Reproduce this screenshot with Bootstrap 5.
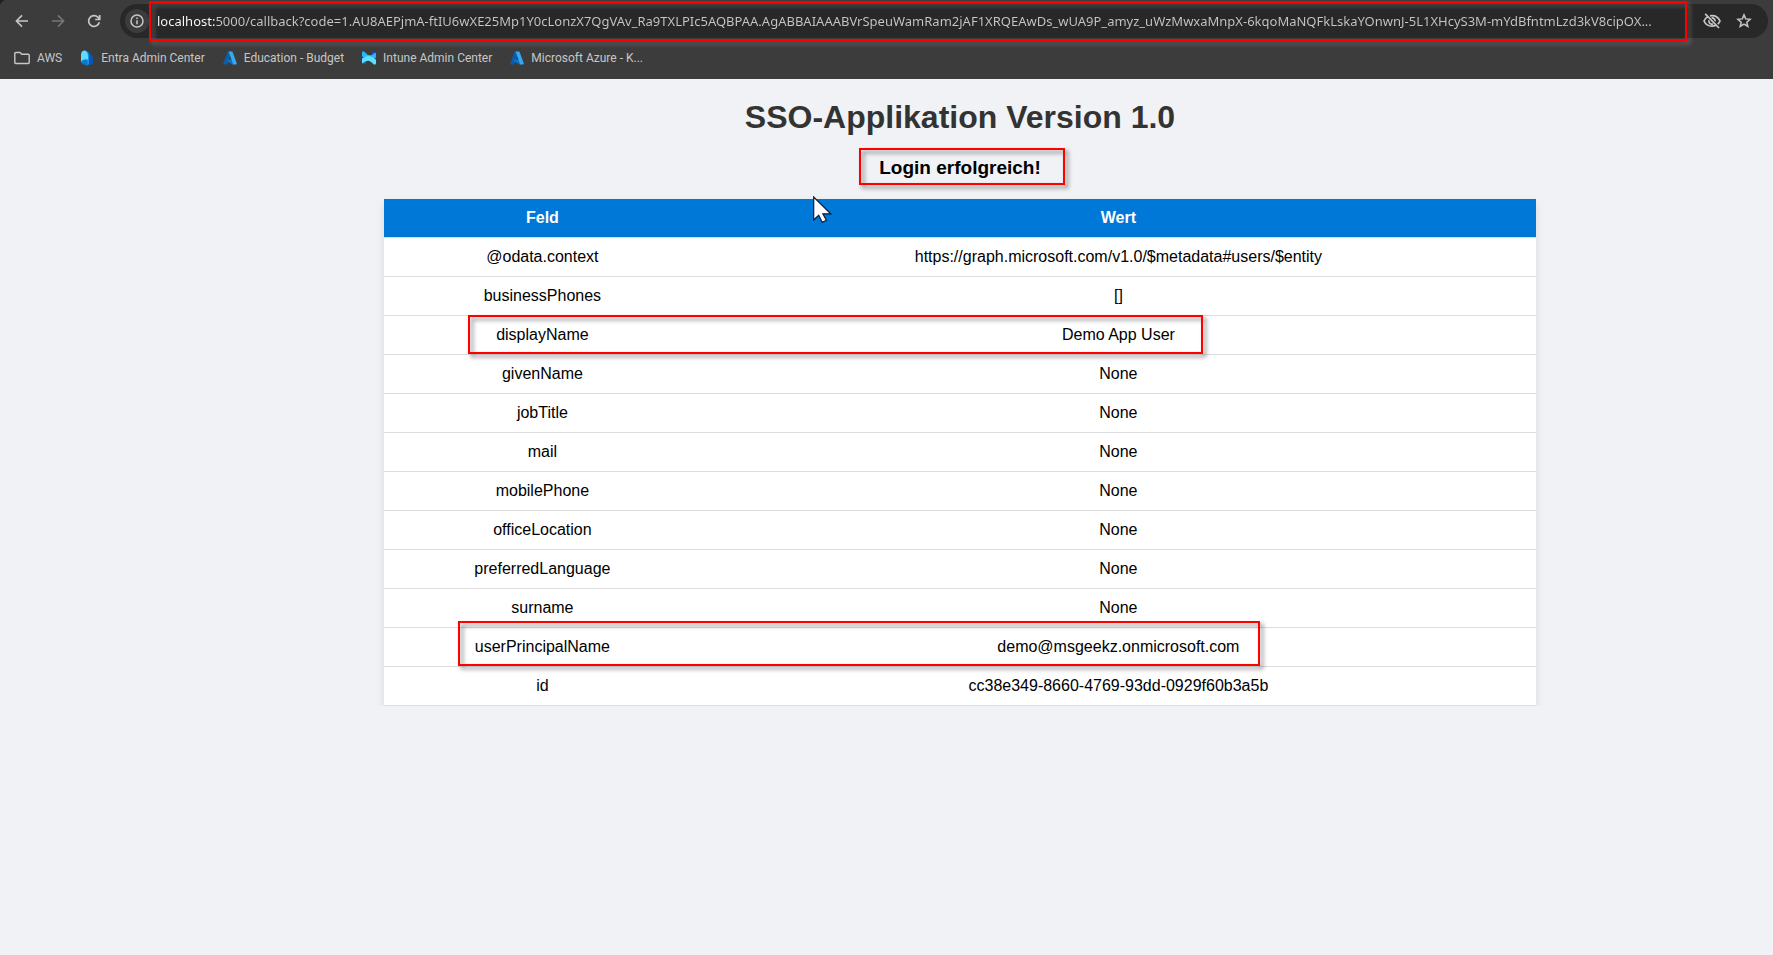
<!DOCTYPE html>
<html lang="de">
<head>
<meta charset="utf-8">
<meta name="viewport" content="width=device-width, initial-scale=1">
<title>SSO-Applikation</title>
<link href="https://cdn.jsdelivr.net/npm/bootstrap@5.3.0/dist/css/bootstrap.min.css" rel="stylesheet">
<style>
  body { background: #f0f2f5; color: #000; font-family: "Liberation Sans", Arial, sans-serif; font-size: 16px; line-height: 18px; }

  /* Browser chrome */
  .browser-bar { background: radial-gradient(circle at 8px 8px, #3c3c3c 8px, #1f1f1f 9px) 0 0 / 8px 8px no-repeat, #3c3c3c; color: #c7c7c7; padding: 4px 5px 2px 11px; }
  .browser-bar svg { display: block; flex: none; }
  .tool-btn { background: none; border: 0; padding: 0; color: inherit; width: 22px; height: 34px; flex: none; }
  .tool-btn:disabled { color: #757575; }
  .nav-tools { gap: 14px; padding-right: 15px; }
  .omnibox { background: #282828; border-radius: 17px; height: 34px; padding: 0 13px 0 5px; }
  .site-info { background: #3c3c3c; border: 0; border-radius: 50%; padding: 0; width: 24px; height: 24px; color: inherit; }
  .url-wrap { margin: 0 13px 0 8px; }
  .url-input { background: linear-gradient(90deg, #fff 58px, #c7c7c7 58px); -webkit-background-clip: text; background-clip: text; -webkit-text-fill-color: transparent; border: 0; outline: 0; padding: 0; display: block; height: 34px; font-family: "Noto Sans", "Open Sans", sans-serif; font-size: 13px; line-height: 18px; }
  .omni-tools { gap: 10px; }
  .bookmark-row { gap: 18px; height: 39px; padding-left: 3px; font-family: Roboto, sans-serif; font-size: 12px; }
  .bookmark-row a { color: #c7c7c7; text-decoration: none; gap: 7px; }

  /* Page */
  .page-main { padding: 20px 0 0 147px; }
  .page-main h1 { color: #333; font-size: 32px; line-height: 36px; font-weight: 700; margin: 0; }
  .page-main h2 { font-size: 19px; line-height: 22px; font-weight: 700; margin: 22px 0 20px; }
  .table-wrap { max-width: 1152px; }
  .user-table { background: #fff; box-shadow: 0 4px 8px rgba(0,0,0,.1); table-layout: fixed; border-collapse: collapse; }
  .user-table th, .user-table td { padding: 10px; border-bottom: 1px solid #ddd; text-align: center; }
  .user-table th { background: #0078d7; color: #fff; }
  .user-table tr { position: relative; }
  .field-col { width: 27.5%; }

  /* Red annotation frames and mouse pointer */
  .marker { position: absolute; border: 2px solid #f00; filter: drop-shadow(3px 3px 2px rgba(0,0,0,.5)); pointer-events: none; }
  .marker-url { inset: -3px 1px -3px -8px; filter: drop-shadow(3px 3px 2px rgba(140,140,140,.6)); }
  .marker-login { inset: -9px -24px -6px -20px; }
  .marker-name { inset: -1px 28.9% 1px 7.3%; }
  .marker-upn { inset: -7px 24% 1px 6.4%; }
  .pointer { position: absolute; left: 429px; top: -3px; }
</style>
</head>
<body>
<header class="browser-bar">
  <div class="d-flex">
    <div class="nav-tools d-flex">
      <button class="tool-btn d-flex align-items-center justify-content-center" type="button" aria-label="Zurück"><svg width="14" height="14" viewBox="0 0 14 14" fill="none" stroke="currentColor" stroke-width="1.6"><path d="M13 7H1.700M7 1.400 1.400 7 7 12.600"/></svg></button>
      <button class="tool-btn d-flex align-items-center justify-content-center" type="button" aria-label="Vorwärts" disabled><svg width="14" height="14" viewBox="0 0 14 14" fill="none" stroke="currentColor" stroke-width="1.600"><path d="M1 7h11.300M7 1.400 12.600 7 7 12.600"/></svg></button>
      <button class="tool-btn d-flex align-items-center justify-content-center" type="button" aria-label="Neu laden"><svg width="14" height="14" viewBox="0 0 14 14" fill="none" stroke="currentColor" stroke-width="1.700"><path d="M12.300 8.200A5.400 5.400 0 1 1 10.900 3.200L12.600 5"/><path d="M12.700 1v4.500H8.200"/></svg></button>
    </div>
    <div class="omnibox d-flex align-items-center flex-grow-1">
      <button class="site-info d-flex align-items-center justify-content-center" type="button" aria-label="Websiteinformationen"><svg width="14" height="14" viewBox="0 0 14 14" fill="none" stroke="currentColor" stroke-width="1.500"><circle cx="7" cy="7" r="6"/><path d="M7 6.200v4M7 3.600v1.500"/></svg></button>
      <div class="url-wrap position-relative flex-grow-1">
        <input class="url-input w-100" type="text" aria-label="Adresse" value="localhost:5000/callback?code=1.AU8AEPjmA-ftIU6wXE25Mp1Y0cLonzX7QgVAv_Ra9TXLPIc5AQBPAA.AgABBAIAAABVrSpeuWamRam2jAF1XRQEAwDs_wUA9P_amyz_uWzMwxaMnpX-6kqoMaNQFkLskaYOnwnJ-5L1XHcyS3M-mYdBfntmLzd3kV8cipOX...">
        <span class="marker marker-url"></span>
      </div>
      <div class="omni-tools d-flex">
        <button class="tool-btn d-flex align-items-center justify-content-center" type="button" aria-label="Cookies blockiert"><svg width="18" height="16" viewBox="0 0 18 16" fill="none" stroke="currentColor" stroke-width="1.700"><path d="M5.200 3.600C3.300 4.500 1.900 6 1 8c1.500 3.300 4.500 5.200 8 5.200 1.500 0 2.800-.3 4-.9M7 2.900c.6-.1 1.300-.2 2-.2 3.500 0 6.500 2 8 5.300-.5 1.200-1.300 2.300-2.300 3.100"/><path d="M6 7.200a3.100 3.100 0 0 0 4 3.800M8.600 4.900A3.100 3.100 0 0 1 12.100 8.400"/><path d="M2.200.8 16 15"/></svg></button>
        <button class="tool-btn d-flex align-items-center justify-content-center" type="button" aria-label="Lesezeichen hinzufügen"><svg width="16" height="16" viewBox="0 0 16 16" fill="none" stroke="currentColor" stroke-width="1.500"><path d="m8 1.900 1.700 4 4.400.4-3.300 2.900 1 4.300L8 11.200l-3.800 2.300 1-4.300-3.300-2.900 4.400-.4z"/></svg></button>
      </div>
    </div>
  </div>
  <nav class="bookmark-row d-flex align-items-center" aria-label="Lesezeichen">
    <a href="#" class="d-flex align-items-center"><svg width="16" height="14" viewBox="0 0 16 14" fill="none" stroke="currentColor" stroke-width="1.400"><path d="M.8 11.500v-9q0-1 1-1H6l1.800 1.800h6.400q1 0 1 1v7.200q0 1-1 1H1.800q-1 0-1-1z"/></svg>AWS</a>
    <a href="#" class="d-flex align-items-center"><svg width="14" height="16" viewBox="0 0 14 16"><path d="M5 1Q7 .2 8.500 1.800L11.500 5q1.500 1.500 1.500 4v5.500H6z" fill="#0a56b5"/><path d="M1 12V5q0-4 3.500-4.500Q9 1 9 6v8l-1.500 1.500z" fill="#1593e6"/><path d="M1 12V5.500Q1 1 4.500.6 8 1.500 8 6.500v3q-3-1-7 2.500z" fill="#5fdcff"/><path d="M1 12.500q1-3 4-3 2.500 0 2.500 3v3L4 14.800z" fill="#087bd0"/></svg>Entra Admin Center</a>
    <a href="#" class="d-flex align-items-center"><svg width="14" height="14" viewBox="0 0 14 14"><path d="M4.700.5h4L4.600 12.800q-.3.700-1 .7H.9q-1 0-.7-1z" fill="#0b5cad"/><path d="M4.500 8.500h6l.8 4.800H9.200L3.800 10z" fill="#0874cf"/><path d="M5.500.5h3.200q.8 0 1 .7l4.100 11.400q.2.900-.8.900H9.400q.8-.2.500-1z" fill="#35a9ed"/></svg>Education - Budget</a>
    <a href="#" class="d-flex align-items-center"><svg width="14" height="14" viewBox="0 0 14 14"><path d="M0 4.500 4 7v5.500Q1 14 0 11zM14 9.500 10 7V1.500Q13 0 14 3z" fill="#0a5fe0"/><path d="M0 1.500Q.5-.3 2.500.7 5.500 4.200 8 4.200q2.500 0 6-2.700v4.700Q10.500 9 8 9 3.500 9 0 5z" fill="#2fb4f5"/><path d="M0 7.800Q3.500 5 6 5q4.500 0 8 4v3.500q-.5 1.800-2.500.8Q8.500 9.800 6 9.800q-2.500 0-6 2.700z" fill="#5ce0ff"/></svg>Intune Admin Center</a>
    <a href="#" class="d-flex align-items-center"><svg width="14" height="14" viewBox="0 0 14 14"><path d="M4.700.5h4L4.600 12.800q-.3.700-1 .7H.9q-1 0-.7-1z" fill="#0b5cad"/><path d="M4.500 8.500h6l.8 4.800H9.200L3.800 10z" fill="#0874cf"/><path d="M5.500.5h3.200q.8 0 1 .7l4.100 11.400q.2.900-.8.900H9.400q.8-.2.500-1z" fill="#35a9ed"/></svg>Microsoft Azure - K...</a>
  </nav>
</header>

<main class="page-main text-center">
  <h1>SSO-Applikation Version 1.0</h1>
  <h2><span class="d-inline-block position-relative">Login erfolgreich!<span class="marker marker-login"></span></span></h2>
  <div class="table-wrap position-relative mx-auto">
    <table class="user-table w-100">
      <thead><tr><th class="field-col" scope="col">Feld</th><th scope="col">Wert</th></tr></thead>
      <tbody>
        <tr><td>@odata.context</td><td>https://graph.microsoft.com/v1.0/$metadata#users/$entity</td></tr>
        <tr><td>businessPhones</td><td>[]</td></tr>
        <tr><td>displayName<span class="marker marker-name"></span></td><td>Demo App User</td></tr>
        <tr><td>givenName</td><td>None</td></tr>
        <tr><td>jobTitle</td><td>None</td></tr>
        <tr><td>mail</td><td>None</td></tr>
        <tr><td>mobilePhone</td><td>None</td></tr>
        <tr><td>officeLocation</td><td>None</td></tr>
        <tr><td>preferredLanguage</td><td>None</td></tr>
        <tr><td>surname</td><td>None</td></tr>
        <tr><td>userPrincipalName<span class="marker marker-upn"></span></td><td>demo@msgeekz.onmicrosoft.com</td></tr>
        <tr><td>id</td><td>cc38e349-8660-4769-93dd-0929f60b3a5b</td></tr>
      </tbody>
    </table>
    <svg class="pointer" width="19" height="27" viewBox="0 0 19 27" aria-hidden="true"><path d="M.7 1v23l5-4.700 3.500 7 4.200-2-3.500-6.500h7.800z" fill="#fff" stroke="#0b1a33" stroke-width="1.200"/></svg>
  </div>
</main>
<script src="https://cdn.jsdelivr.net/npm/bootstrap@5.3.0/dist/js/bootstrap.bundle.min.js"></script>
</body>
</html>
